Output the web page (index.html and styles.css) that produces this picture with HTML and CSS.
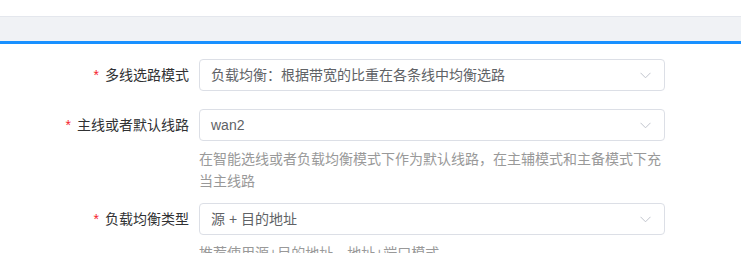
FILE: index.html
```html
<!DOCTYPE html>
<html lang="zh-CN">
<head>
<meta charset="utf-8">
<link rel="stylesheet" href="styles.css">
</head>
<body>
<div class="topbar"></div>
<div class="tabs"></div>
<form class="form">
  <div class="row">
    <label class="label"><span class="req">*</span>多线选路模式</label>
    <div class="content">
      <div class="select"><span class="value">负载均衡：根据带宽的比重在各条线中均衡选路</span>
        <svg class="arrow" width="11" height="7" viewBox="0 0 11 7"><path d="M0.5 0.8 L5.5 5.8 L10.5 0.8" fill="none" stroke="#c0c4cc" stroke-width="1"/></svg>
      </div>
    </div>
  </div>
  <div class="row has-help">
    <label class="label"><span class="req">*</span>主线或者默认线路</label>
    <div class="content">
      <div class="select"><span class="value">wan2</span>
        <svg class="arrow" width="11" height="7" viewBox="0 0 11 7"><path d="M0.5 0.8 L5.5 5.8 L10.5 0.8" fill="none" stroke="#c0c4cc" stroke-width="1"/></svg>
      </div>
      <div class="help">在智能选线或者负载均衡模式下作为默认线路，在主辅模式和主备模式下充当主线路</div>
    </div>
  </div>
  <div class="row has-help">
    <label class="label"><span class="req">*</span>负载均衡类型</label>
    <div class="content">
      <div class="select"><span class="value">源 + 目的地址</span>
        <svg class="arrow" width="11" height="7" viewBox="0 0 11 7"><path d="M0.5 0.8 L5.5 5.8 L10.5 0.8" fill="none" stroke="#c0c4cc" stroke-width="1"/></svg>
      </div>
      <div class="help">推荐使用源+目的地址，地址+端口模式</div>
    </div>
  </div>
</form>
</body>
</html>
```
FILE: styles.css
```css
* { box-sizing: border-box; }
html, body {
  margin: 0;
  padding: 0;
  background: #fff;
  font-family: "Liberation Sans", "Noto Sans CJK SC", sans-serif;
  font-size: 14px;
  overflow: hidden;
}
.topbar {
  height: 16px;
  background: #fff;
}
.tabs {
  height: 28px;
  background: #f0f2f5;
  border-top: 1px solid #e4e7ed;
  border-bottom: 3px solid #1890ff;
}
.form {
  padding-top: 15px;
  margin: 0;
}
.row {
  display: flex;
  align-items: flex-start;
  margin-bottom: 18px;
}
.row.has-help { margin-bottom: 11px; }
.label {
  width: 199px;
  flex: none;
  padding-right: 10px;
  text-align: right;
  line-height: 32px;
  color: #303133;
}
.req {
  color: #f5222d;
  margin-right: 6px;
}
.content {
  width: 466px;
  flex: none;
}
.select {
  height: 32px;
  border: 1px solid #dcdfe6;
  border-radius: 4px;
  display: flex;
  align-items: center;
  justify-content: space-between;
  padding: 0 12px 0 11px;
  color: #606266;
}
.value { line-height: 30px; }
.arrow { display: block; margin-right: 1px; }
.help {
  margin-top: 7px;
  line-height: 22px;
  color: #999;
}
```
